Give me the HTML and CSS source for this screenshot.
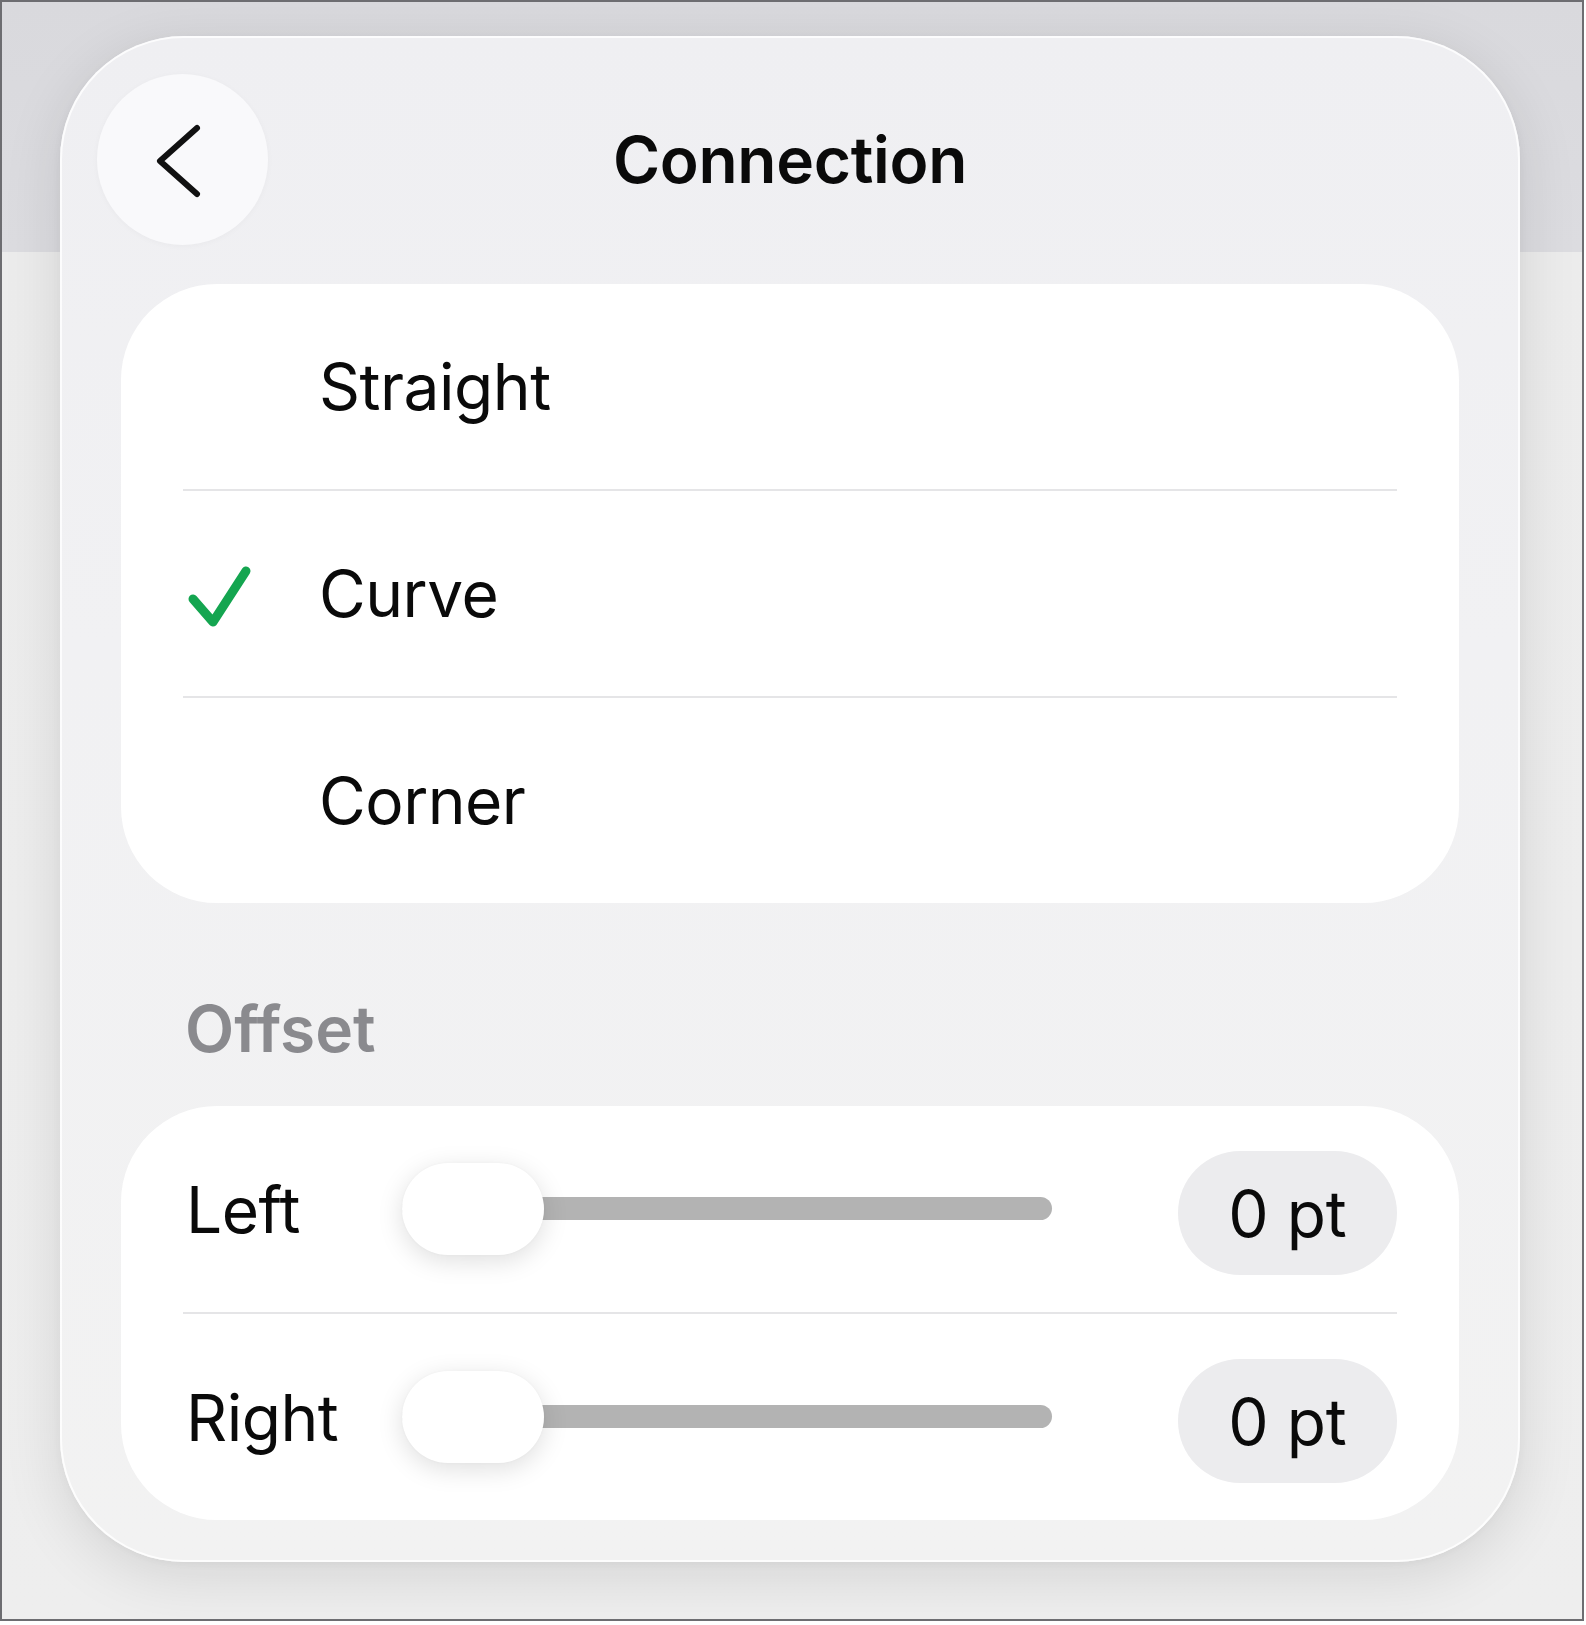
FILE: index.html
```html
<!DOCTYPE html>
<html lang="en">
<head>
<meta charset="utf-8">
<title>Connection</title>
<link rel="stylesheet" href="styles.css">
</head>
<body>
<div class="frame">
  <div class="panel">
    <div class="header">
      <button class="back" aria-label="Back">
        <svg width="60" height="80" viewBox="0 0 60 80"><polyline points="44,8 7,41 44,74" fill="none" stroke="#111" stroke-width="6" stroke-linecap="round" stroke-linejoin="round"/></svg>
      </button>
      <h1 class="title">Connection</h1>
      <span></span>
    </div>

    <div class="card options">
      <div class="row"><span class="mark"></span><span class="label">Straight</span></div>
      <div class="row"><span class="mark"><svg width="67" height="66" viewBox="0 0 67 66"><polyline points="7,36 27,59 60,8" fill="none" stroke="#14a550" stroke-width="9" stroke-linecap="round" stroke-linejoin="round"/></svg></span><span class="label">Curve</span></div>
      <div class="row"><span class="mark"></span><span class="label">Corner</span></div>
    </div>

    <div class="section-title">Offset</div>

    <div class="card offsets">
      <div class="row srow">
        <span class="slabel">Left</span>
        <div class="slider"><div class="track"></div><div class="thumb"></div></div>
        <span class="value">0 pt</span>
      </div>
      <div class="row srow">
        <span class="slabel">Right</span>
        <div class="slider"><div class="track"></div><div class="thumb"></div></div>
        <span class="value">0 pt</span>
      </div>
    </div>
  </div>
</div>
</body>
</html>
```

FILE: styles.css
```css
html, body {
  margin: 0;
  padding: 0;
  background: #ffffff;
}
body {
  font-family: Inter, "Noto Sans", "DejaVu Sans", sans-serif;
  color: #0a0a0a;
}
.frame {
  box-sizing: border-box;
  width: 1584px;
  height: 1621px;
  border: 2px solid #6d6d71;
  background: linear-gradient(to bottom, #d9d9dd 0, #dcdce0 250px, #ececec 250px, #eeeeee 100%);
  padding: 34px 0 0 58px;
  overflow: hidden;
}
.panel {
  box-sizing: border-box;
  width: 1460px;
  height: 1526px;
  border-radius: 124px;
  background: linear-gradient(to bottom, #efeff2 0%, #f1f1f3 40%, #f2f2f2 100%);
  box-shadow: inset 0 0 0 2px rgba(255,255,255,0.8), 0 14px 60px rgba(0,0,0,0.11), 0 2px 10px rgba(0,0,0,0.04);
  padding: 38px 61px 0;
}
.header {
  display: grid;
  grid-template-columns: 171px 1fr 171px;
  align-items: center;
  height: 171px;
  margin: 0 -24px;
}
.back {
  width: 171px;
  height: 171px;
  border-radius: 50%;
  border: none;
  padding: 0;
  background: #f9f9fb;
  box-shadow: 0 1px 6px rgba(0,0,0,0.03);
  display: flex;
  align-items: center;
  justify-content: center;
}
.title {
  margin: 0;
  text-align: center;
  font-size: 64px;
  font-weight: 600;
  letter-spacing: -0.3px;
  line-height: 77px;
}
.card {
  background: #ffffff;
  border-radius: 96px;
  padding: 0 62px;
}
.options {
  margin-top: 39px;
}
.row {
  box-sizing: border-box;
  display: flex;
  align-items: center;
  height: 207px;
  border-top: 2px solid #e5e5e7;
  font-size: 64px;
  line-height: 77px;
  letter-spacing: -0.5px;
}
.row:first-child {
  height: 205px;
  border-top: none;
}
.mark {
  width: 136px;
  flex: none;
  display: flex;
  align-items: center;
  padding-left: 3px;
  box-sizing: border-box;
}
.mark svg { display: block; margin-top: 5px; }
.section-title {
  margin: 87px 0 39px 64px;
  font-size: 64px;
  line-height: 77px;
  font-weight: 600;
  color: #8a8a8e;
}
.offsets .row { height: 208px; }
.offsets .row:first-child { height: 206px; }
.slabel {
  width: 219px;
  flex: none;
  padding-left: 3px;
  box-sizing: border-box;
}
.slider {
  position: relative;
  width: 650px;
  height: 92px;
  flex: none;
}
.track {
  position: absolute;
  left: 0;
  right: 0;
  top: 34px;
  height: 23px;
  border-radius: 12px;
  background: #b3b3b3;
}
.thumb {
  position: absolute;
  left: 0;
  top: 0;
  width: 142px;
  height: 92px;
  border-radius: 46px;
  background: #ffffff;
  box-shadow: 0 6px 26px rgba(0,0,0,0.13), 0 0 3px rgba(0,0,0,0.03);
}
.value {
  margin-left: auto;
  width: 219px;
  height: 124px;
  border-radius: 62px;
  background: #ececee;
  display: flex;
  align-items: center;
  justify-content: center;
  margin-top: 8px;
  letter-spacing: 0;
}
```
